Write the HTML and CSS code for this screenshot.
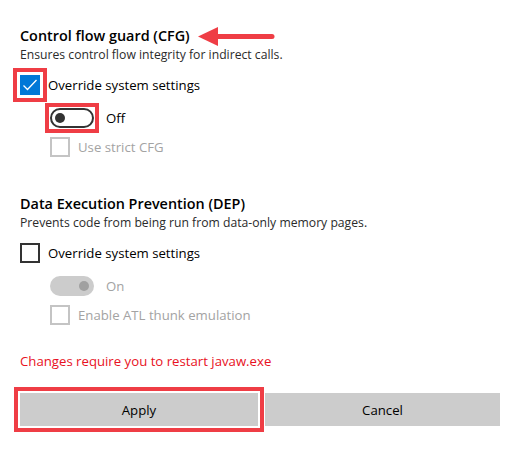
FILE: index.html
```html
<!DOCTYPE html>
<html lang="en">
<head>
<meta charset="utf-8">
<title>Program settings</title>
<link rel="stylesheet" href="styles.css">
</head>
<body>
<main class="page">
  <section class="group group-cfg">
    <div class="title-row">
      <h2 class="title">Control flow guard (CFG)</h2>
      <svg class="arrow" width="78" height="22" viewBox="0 0 78 22" aria-hidden="true">
        <path d="M20 11.5 H74" stroke="#ef3d45" stroke-width="5" stroke-linecap="round"/>
        <path d="M0 11.5 L20 2 L20 21 Z" fill="#ef3d45"/>
      </svg>
    </div>
    <p class="desc">Ensures control flow integrity for indirect calls.</p>
    <div class="check-row">
      <span class="box checked marked">
        <svg width="20" height="20" viewBox="0 0 20 20" aria-hidden="true"><path d="M3.5 10.5 L7.5 14.5 L16.5 5" fill="none" stroke="#fff" stroke-width="1.3"/></svg>
      </span>
      <span class="label">Override system settings</span>
    </div>
    <div class="toggle-row">
      <span class="toggle off marked-toggle"><span class="knob"></span></span>
      <span class="label">Off</span>
    </div>
    <div class="check-row sub disabled">
      <span class="box"></span>
      <span class="label">Use strict CFG</span>
    </div>
  </section>

  <section class="group group-dep">
    <div class="title-row">
      <h2 class="title">Data Execution Prevention (DEP)</h2>
    </div>
    <p class="desc">Prevents code from being run from data-only memory pages.</p>
    <div class="check-row">
      <span class="box"></span>
      <span class="label">Override system settings</span>
    </div>
    <div class="toggle-row disabled">
      <span class="toggle on-disabled"><span class="knob"></span></span>
      <span class="label">On</span>
    </div>
    <div class="check-row sub disabled">
      <span class="box"></span>
      <span class="label">Enable ATL thunk emulation</span>
    </div>
  </section>

  <p class="warning">Changes require you to restart javaw.exe</p>

  <div class="buttons">
    <button class="btn btn-apply" type="button">Apply</button>
    <button class="btn" type="button">Cancel</button>
  </div>
</main>
</body>
</html>
```
FILE: styles.css
```css
* { box-sizing: border-box; }

html, body {
  margin: 0;
  padding: 0;
  background: #ffffff;
}

body {
  font-family: "Open Sans", "Noto Sans", "Liberation Sans", sans-serif;
  color: #000;
}

.page {
  width: 522px;
  height: 449px;
  padding: 26px 22px 0 20px;
  overflow: hidden;
}

.title-row {
  display: flex;
  align-items: center;
  height: 20px;
}

.title {
  margin: 0;
  font-size: 14.4px;
  font-weight: 600;
  line-height: 20px;
}

.arrow {
  margin-left: 8px;
  display: block;
}

.desc {
  margin: 0;
  font-size: 12.2px;
  line-height: 18px;
  color: #2b2b2b;
}

.check-row {
  display: flex;
  align-items: center;
  gap: 8px;
  height: 20px;
  margin-top: 11px;
  font-size: 13.2px;
}

.check-row.sub {
  margin-top: 9px;
  padding-left: 30px;
}

.box {
  width: 20px;
  height: 20px;
  flex: none;
  border: 2px solid #333;
  background: #fff;
  display: flex;
  align-items: center;
  justify-content: center;
}

.box.checked {
  border: none;
  background: #0078d7;
}

.box.marked {
  box-shadow: 0 0 0 3px #fff, 0 0 0 7px #ef3d45;
}

.disabled .box {
  border-color: #c4c4c4;
}

.disabled .label {
  color: #a3a3a3;
}

.toggle-row {
  display: flex;
  align-items: center;
  gap: 12px;
  height: 20px;
  margin-top: 13px;
  padding-left: 30px;
  font-size: 13.2px;
}

.toggle {
  width: 44px;
  height: 20px;
  flex: none;
  border-radius: 10px;
  display: flex;
  align-items: center;
}

.toggle .knob {
  width: 10px;
  height: 10px;
  border-radius: 50%;
}

.toggle.off {
  border: 2px solid #333;
  padding-left: 3px;
}

.toggle.off .knob {
  background: #333;
}

.marked-toggle {
  position: relative;
}

.marked-toggle::after {
  content: "";
  position: absolute;
  left: -7px;
  top: -7px;
  right: -7px;
  bottom: -7px;
  border: 4px solid #ef3d45;
}

.toggle.on-disabled {
  background: #cccccc;
  justify-content: flex-end;
  padding-right: 5px;
}

.toggle.on-disabled .knob {
  background: #a0a0a0;
}

.group-dep {
  margin-top: 37px;
}

.warning {
  margin: 26px 0 0;
  font-size: 13.2px;
  line-height: 20px;
  color: #e81123;
}

.buttons {
  display: grid;
  grid-template-columns: 238px 235px;
  column-gap: 7px;
  margin-top: 22px;
}

.btn {
  height: 33px;
  margin: 0;
  padding: 0;
  border: none;
  background: #cccccc;
  font-family: inherit;
  font-size: 13.2px;
  color: #000;
}

.btn-apply {
  box-shadow: 0 0 0 2px #fff, 0 0 0 6px #ef3d45;
}
```
